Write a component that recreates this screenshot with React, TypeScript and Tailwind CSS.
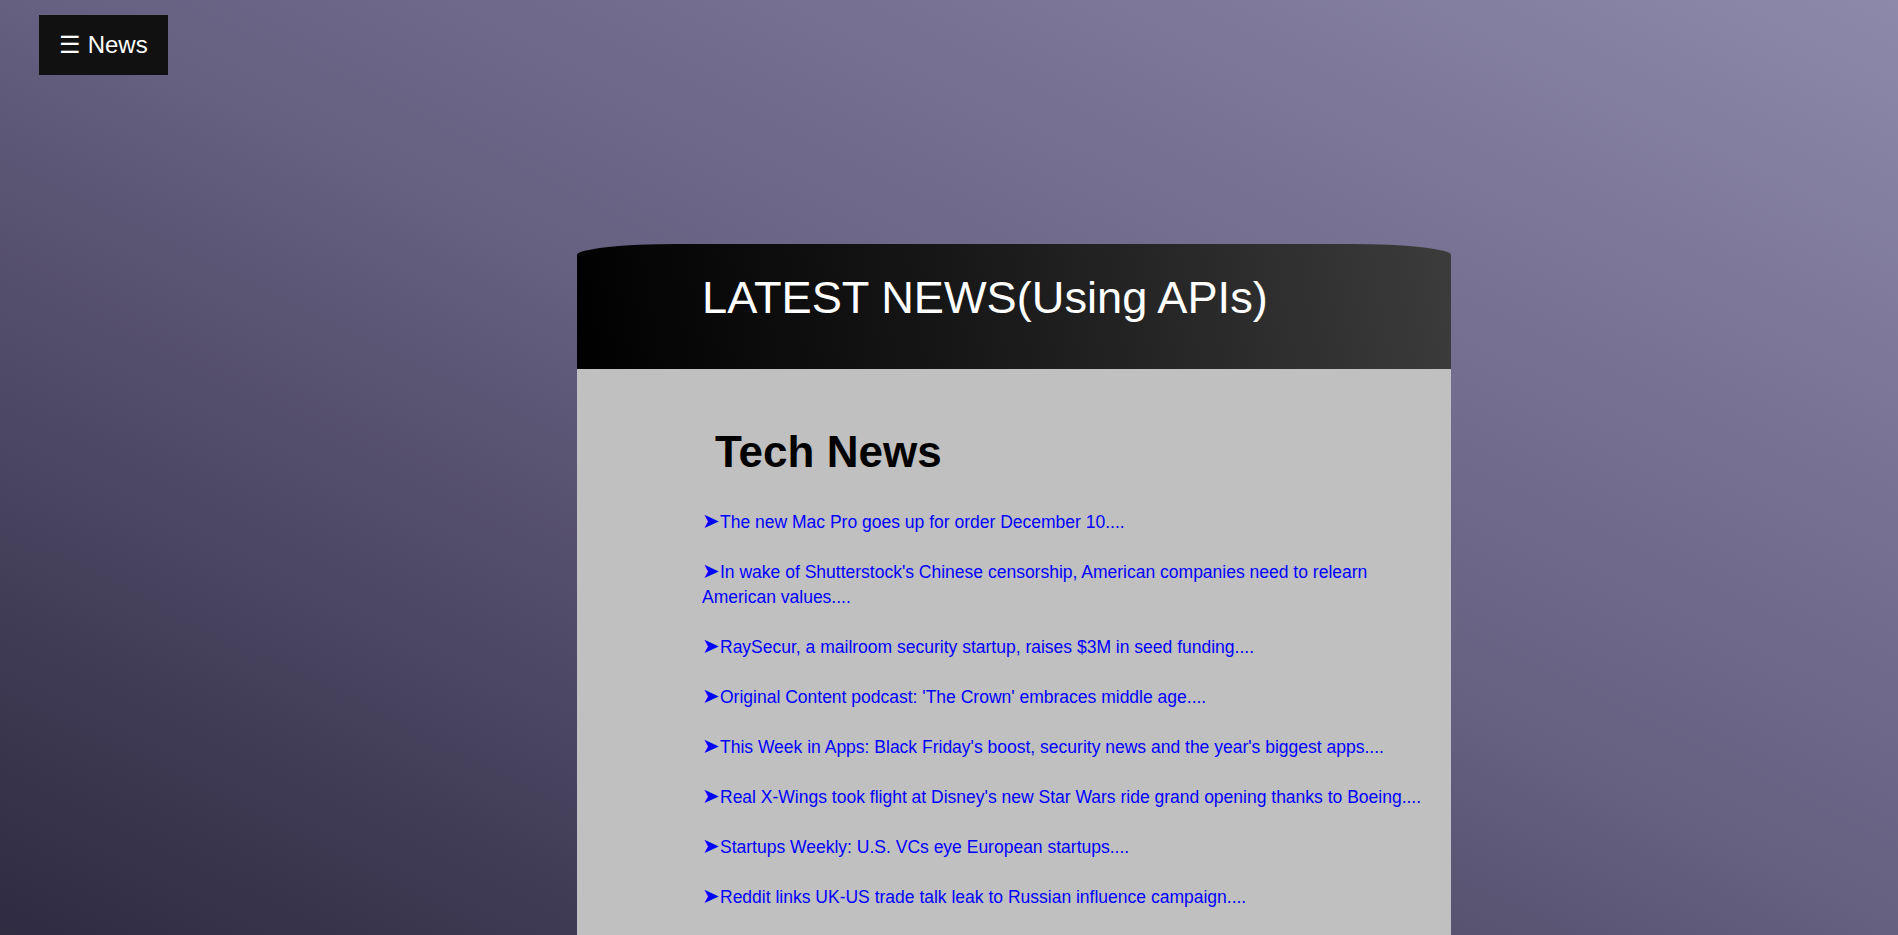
import React from "react";

const headlines = [
  "The new Mac Pro goes up for order December 10....",
  "In wake of Shutterstock's Chinese censorship, American companies need to relearn American values....",
  "RaySecur, a mailroom security startup, raises $3M in seed funding....",
  "Original Content podcast: 'The Crown' embraces middle age....",
  "This Week in Apps: Black Friday's boost, security news and the year's biggest apps....",
  "Real X-Wings took flight at Disney's new Star Wars ride grand opening thanks to Boeing....",
  "Startups Weekly: U.S. VCs eye European startups....",
  "Reddit links UK-US trade talk leak to Russian influence campaign....",
];

export default function App() {
  return (
    <div className="h-screen overflow-hidden bg-gradient-to-tr from-[#2f2b41] via-[#655f80] to-[#8d89ab] font-['Liberation_Sans',Arial,sans-serif]">
      <nav className="pt-[15px] pl-[39px]">
        <button className="bg-[#111111] text-white text-[24px] leading-[28px] px-5 py-4">
          ☰ News
        </button>
      </nav>

      <main className="mt-[169px] ml-[577px] w-[874px]">
        <header className="h-[125px] rounded-tl-[100px_11px] rounded-tr-[100px_11px] bg-[linear-gradient(80deg,#000000_0%,#181818_45%,#3c3c3c_100%)] pl-[125px] pt-[28px]">
          <h1 className="text-white text-[45.2px] leading-[52px] font-normal">LATEST NEWS(Using APIs)</h1>
        </header>

        <section className="bg-[#c0c0c0] pl-[125px] pr-[20px] pt-[58px] pb-[40px]">
          <h2 className="pl-[13px] text-black text-[44px] leading-[49px] font-bold">Tech News</h2>
          <ul className="mt-[34px]">
            {headlines.map((h) => (
              <li key={h} className="mb-[25px] text-[17.5px] leading-[25px] text-[#0000ff]">
                <a href="#">
                  <span className="text-[21px] leading-[0]">➤</span>
                  {h}
                </a>
              </li>
            ))}
          </ul>
        </section>
      </main>
    </div>
  );
}
